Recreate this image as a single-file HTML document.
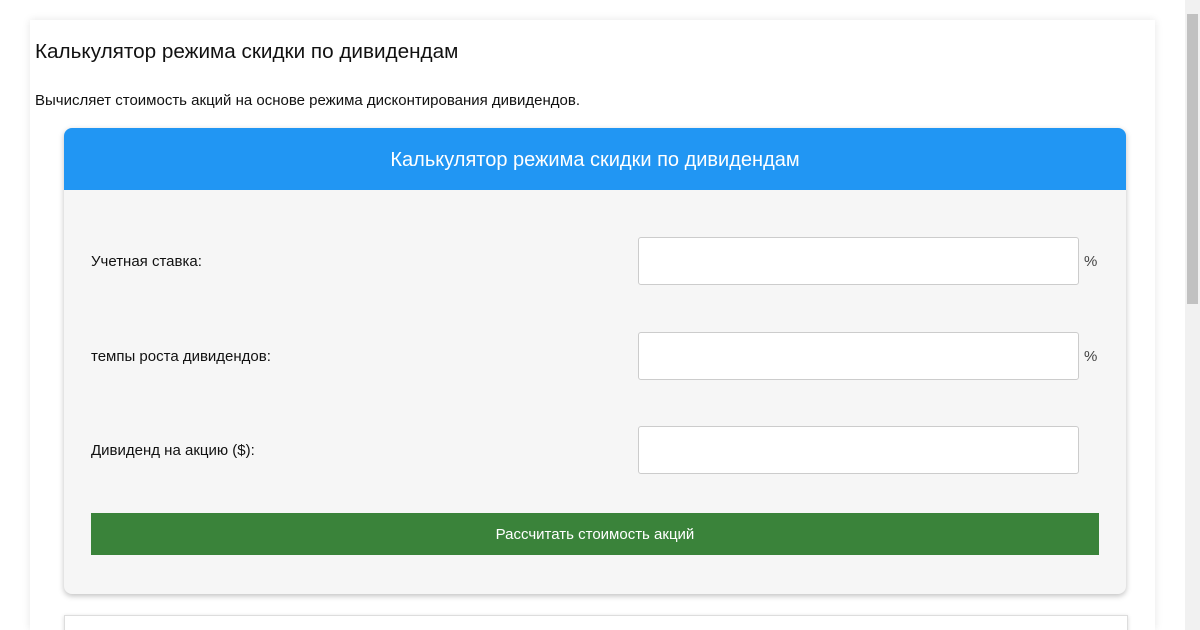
<!DOCTYPE html>
<html><head><meta charset="utf-8"><style>
html,body{margin:0;padding:0;width:1200px;height:630px;overflow:hidden;background:#fff;font-family:"Liberation Sans",sans-serif;}
.sb{position:absolute;left:1185px;top:0;width:15px;height:630px;background:#f1f1f1;}
.th{position:absolute;left:2px;top:14px;width:11px;height:290px;background:#c1c1c1;}
.wrap{position:absolute;left:30px;top:20px;width:1125px;height:610px;background:#fff;box-shadow:0 0 8px rgba(0,0,0,.1);overflow:hidden;}
h1{position:absolute;left:5px;top:20px;margin:0;font-size:20.7px;font-weight:normal;color:#111;}
.d{position:absolute;left:5px;top:72px;font-size:15px;color:#111;}
.card{position:absolute;left:34px;top:108px;width:1062px;height:466px;background:#f6f6f6;border-radius:8px;box-shadow:0 2px 6px rgba(0,0,0,.25);overflow:hidden;}
.hd{height:62px;background:#2196f3;color:#fff;font-size:20px;text-align:center;line-height:64px;}
.lab{position:absolute;left:27px;font-size:15px;color:#111;}
.in{position:absolute;left:574px;width:439px;height:46px;background:#fff;border:1px solid #ccc;border-radius:3px;}
.pc{position:absolute;left:1020px;font-size:15px;color:#444;}
.btn{position:absolute;left:27px;top:385px;width:1008px;height:42px;background:#3a833a;color:#fff;font-size:15px;text-align:center;line-height:44px;}
.c2{position:absolute;left:34px;top:595px;width:1062px;height:60px;background:#fff;border:1px solid #ddd;box-shadow:0 1px 4px rgba(0,0,0,.15);}
</style></head><body>
<div class="wrap">
<h1>Калькулятор режима скидки по дивидендам</h1>
<div class="d">Вычисляет стоимость акций на основе режима дисконтирования дивидендов.</div>
<div class="card">
<div class="hd">Калькулятор режима скидки по дивидендам</div>
<div class="lab" style="top:125px">Учетная ставка:</div>
<div class="in" style="top:109px"></div><div class="pc" style="top:125px">%</div>
<div class="lab" style="top:220px">темпы роста дивидендов:</div>
<div class="in" style="top:204px"></div><div class="pc" style="top:220px">%</div>
<div class="lab" style="top:314px">Дивиденд на акцию ($):</div>
<div class="in" style="top:298px"></div>
<div class="btn">Рассчитать стоимость акций</div>
</div>
<div class="c2"></div>
</div>
<div class="sb"><div class="th"></div></div>
</body></html>
